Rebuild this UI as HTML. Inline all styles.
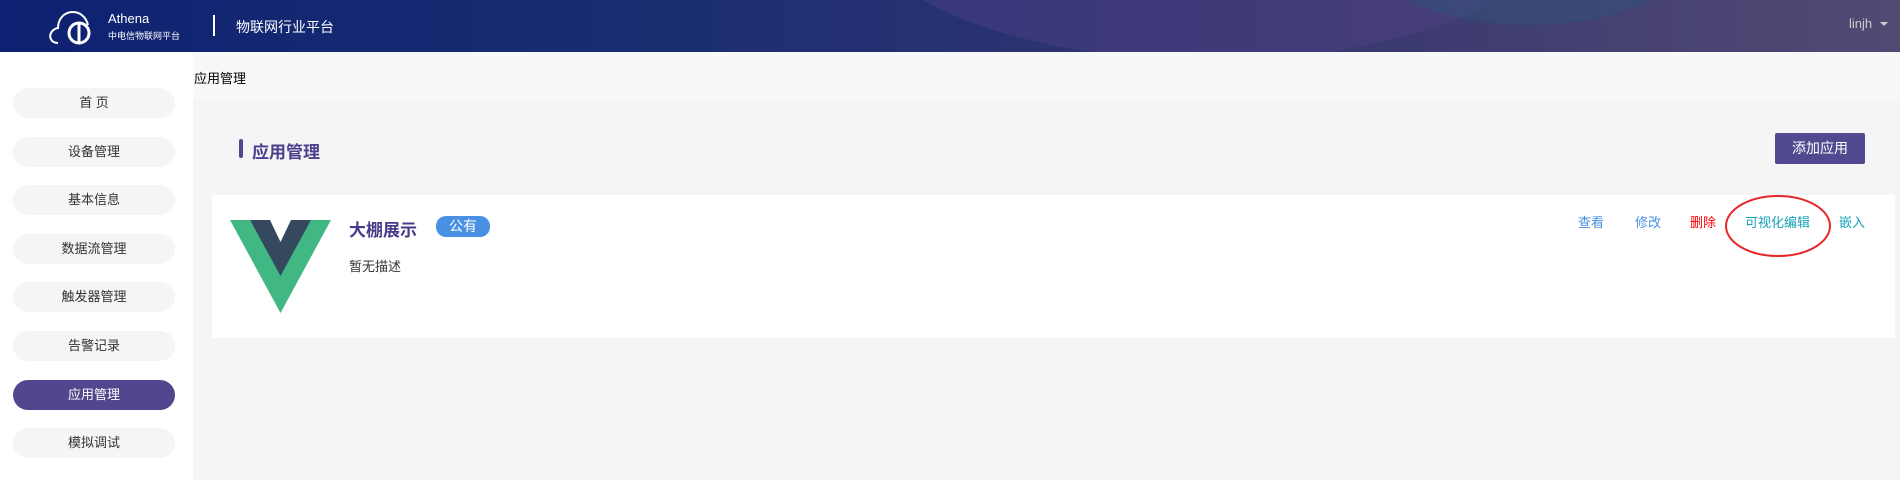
<!DOCTYPE html>
<html><head><meta charset="utf-8"><style>
*{margin:0;padding:0;box-sizing:border-box}
body{width:1900px;height:480px;overflow:hidden;font-family:"Liberation Sans","Noto Sans CJK SC",sans-serif;background:#f5f5f5;position:relative}
.hdr{position:absolute;left:0;top:0;width:1900px;height:52px;background:linear-gradient(90deg,#0e2172 0%,#1a2e72 35%,#34356f 65%,#524a73 100%);overflow:hidden}
.b1{position:absolute;left:860px;top:-220px;width:700px;height:280px;border-radius:50%;background:rgba(90,70,140,.35)}
.b2{position:absolute;left:1350px;top:-160px;width:360px;height:185px;border-radius:50%;background:rgba(50,80,120,.55)}
.abs{position:absolute}
.side{position:absolute;left:0;top:52px;width:193px;height:428px;background:#fff}
.pill{position:absolute;left:13px;width:162px;height:30px;border-radius:15px;background:#f4f5f7;color:#333;font-size:13px;text-align:center;line-height:30px}
.pill.on{background:#52478e;color:#fff}
.a{position:absolute;top:214px;font-size:13px;line-height:18px}
</style></head><body>
<div class="hdr"><div class="b1"></div><div class="b2"></div>
<svg class="abs" style="left:48px;top:8px" width="48" height="38" viewBox="0 0 48 38"><path d="M10 35 C3 35 1 29 3 25 C5 21 9 20 10 20 C10 11 16 4 25 4 C32 4 38 9 40 17" fill="none" stroke="#fff" stroke-width="2"/><circle cx="31" cy="25" r="10" fill="none" stroke="#fff" stroke-width="3"/><path d="M31 15 L31 36" stroke="#fff" stroke-width="3"/></svg>
<div class="abs" style="left:108px;top:11px;color:#fff;font-size:13px">Athena</div>
<div class="abs" style="left:108px;top:29px;color:#fff;font-size:9px">中电信物联网平台</div>
<div class="abs" style="left:213px;top:15px;width:2px;height:21px;background:#fff"></div>
<div class="abs" style="left:236px;top:17px;color:#fff;font-size:14px">物联网行业平台</div>
<div class="abs" style="left:1849px;top:16px;color:#ccc;font-size:13px">linjh</div>
<div class="abs" style="left:1880px;top:22px;width:0;height:0;border-left:4px solid transparent;border-right:4px solid transparent;border-top:4px solid #ccc"></div>
</div>
<div class="side">
<div class="pill" style="top:36px">首 页</div>
<div class="pill" style="top:85px">设备管理</div>
<div class="pill" style="top:133px">基本信息</div>
<div class="pill" style="top:182px">数据流管理</div>
<div class="pill" style="top:230px">触发器管理</div>
<div class="pill" style="top:279px">告警记录</div>
<div class="pill on" style="top:328px">应用管理</div>
<div class="pill" style="top:376px">模拟调试</div>
</div>
<div class="abs" style="left:193px;top:52px;width:1707px;height:48px;background:#f7f8fa"></div>
<div class="abs" style="left:194px;top:68px;font-size:13px;color:#000">应用管理</div>
<div class="abs" style="left:239px;top:139px;width:4px;height:19px;border-radius:2px;background:#52478e"></div>
<div class="abs" style="left:252px;top:138px;font-size:17px;font-weight:bold;color:#4a3f8a">应用管理</div>
<div class="abs" style="left:1775px;top:133px;width:90px;height:31px;background:#524a91;border-radius:2px;color:#fff;font-size:14px;text-align:center;line-height:31px">添加应用</div>
<div class="abs" style="left:212px;top:195px;width:1683px;height:143px;background:#fff"></div>
<svg class="abs" style="left:230px;top:220px" width="101" height="93" viewBox="0 0 101 93"><path d="M0 0H20L50.5 53L81 0H101L50.5 93Z" fill="#41b883"/><path d="M20 0H40L50.5 22L61 0H81L50.5 56Z" fill="#34495e"/></svg>
<div class="abs" style="left:349px;top:216px;font-size:17px;font-weight:bold;color:#4a3b8a">大棚展示</div>
<div class="abs" style="left:436px;top:216px;width:54px;height:21px;border-radius:10px;background:#4a90e2;color:#fff;font-size:14px;text-align:center;line-height:21px">公有</div>
<div class="abs" style="left:349px;top:256px;font-size:13px;color:#333">暂无描述</div>
<div class="a" style="left:1578px;color:#4a90e2">查看</div>
<div class="a" style="left:1635px;color:#4a90e2">修改</div>
<div class="a" style="left:1690px;color:#f00">删除</div>
<div class="a" style="left:1745px;color:#17a2b8">可视化编辑</div>
<div class="a" style="left:1839px;color:#17a2b8">嵌入</div>
<svg class="abs" style="left:1722px;top:193px" width="112" height="66"><ellipse cx="56" cy="33" rx="52" ry="30" fill="none" stroke="#e8262a" stroke-width="2"/></svg>
</body></html>
